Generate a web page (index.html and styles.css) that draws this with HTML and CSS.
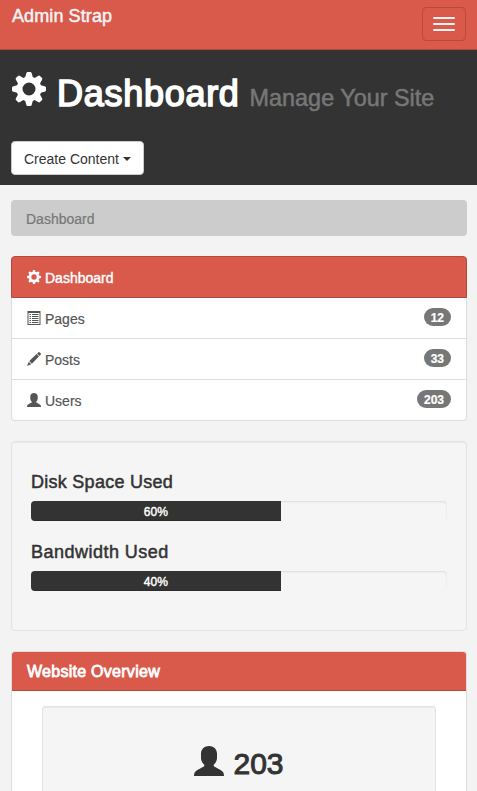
FILE: index.html
```html
<!DOCTYPE html>
<html lang="en">
<head>
<meta charset="utf-8">
<title>Admin Strap</title>
<link rel="stylesheet" href="styles.css">
</head>
<body>
<svg class="defs" width="0" height="0">
  <symbol id="gear" viewBox="-17 -17 34 34">
    <path id="tooth" d="M-4.300-10-2.800-15.500Q-2.500-17-1.500-17H1.500Q2.500-17 2.800-15.500L4.300-10Z"/>
    <use href="#tooth" transform="rotate(45)"/><use href="#tooth" transform="rotate(90)"/>
    <use href="#tooth" transform="rotate(135)"/><use href="#tooth" transform="rotate(180)"/>
    <use href="#tooth" transform="rotate(225)"/><use href="#tooth" transform="rotate(270)"/>
    <use href="#tooth" transform="rotate(315)"/>
    <circle r="9.500" fill="none" stroke="currentColor" stroke-width="6"/>
  </symbol>
  <symbol id="user" viewBox="0 0 30 30">
    <path d="M15 0C19.500 0 23 3 23 7.500V12C23 14 22 17 19.700 18.700V20C20 21 28 24 29.300 26.500Q30 27.500 30 30H0Q0 27.500.7 26.500C2 24 10 21 10.300 20V18.700C8 17 7 14 7 12V7.500C7 3 10.500 0 15 0Z"/>
  </symbol>
</svg>

<nav class="navbar">
  <a class="brand">Admin Strap</a>
  <button class="toggle" aria-label="Menu"><i></i><i></i><i></i></button>
</nav>

<header class="header">
  <h1 class="title">
    <svg class="title-icon"><use href="#gear"/></svg>
    <span class="title-text">Dashboard</span>
    <small class="subtitle">Manage Your Site</small>
  </h1>
  <button class="create"><span>Create Content</span><i class="caret"></i></button>
</header>

<main class="main">
  <div class="breadcrumb">Dashboard</div>

  <div class="list">
    <a class="item active"><svg class="icon"><use href="#gear"/></svg><span class="label">Dashboard</span></a>
    <a class="item">
      <svg class="icon" viewBox="0 0 14 14"><path fill-rule="evenodd" d="M.5 0H13.500V14H.5ZM1.500 2V13H12.500V2Z"/><path d="M2.500 3H4V4H2.500ZM5 3H11.500V4H5ZM2.500 5H4V6H2.500ZM5 5H11.500V6H5ZM2.500 7H4V8H2.500ZM5 7H11.500V8H5ZM2.500 9H4V10H2.500ZM5 9H11.500V10H5ZM2.500 11H4V12H2.500ZM5 11H11.500V12H5Z"/></svg>
      <span class="label">Pages</span><span class="badge">12</span>
    </a>
    <a class="item">
      <svg class="icon" viewBox="0 0 14 14"><path d="M10 1.700 11.200.5Q12-.3 12.800.5L13.600 1.300Q14.300 2 13.600 2.800L12.400 4ZM9.500 2.100 11.900 4.500 4.900 11.700 2.300 9.100ZM1.800 9.700 4.300 12.200 0 14Z"/></svg>
      <span class="label">Posts</span><span class="badge">33</span>
    </a>
    <a class="item"><svg class="icon"><use href="#user"/></svg><span class="label">Users</span><span class="badge">203</span></a>
  </div>

  <section class="well usage">
    <h4 class="usage-title disk">Disk Space Used</h4>
    <div class="progress"><div class="bar">60%</div></div>
    <h4 class="usage-title bandwidth">Bandwidth Used</h4>
    <div class="progress"><div class="bar">40%</div></div>
  </section>

  <section class="panel">
    <h3 class="panel-heading"><span>Website Overview</span></h3>
    <div class="panel-body">
      <div class="well stat">
        <h2 class="stat-value"><svg class="stat-icon"><use href="#user"/></svg><span>203</span></h2>
      </div>
    </div>
  </section>
</main>
</body>
</html>
```

FILE: styles.css
```css
* { box-sizing: border-box; }
body {
  margin: 0;
  background: #f3f3f3;
  color: #333;
  font: 14px/20px "Liberation Sans", sans-serif;
}
svg { display: block; fill: currentColor; flex: none; }
.defs { display: none; }
h1, h2, h3, h4 { margin: 0; }
button { font: inherit; }

.navbar {
  display: flex;
  justify-content: space-between;
  height: 50px;
  padding: 6px 11px 0 12px;
  background: #d9594b;
  border-bottom: 1px solid #b6483d;
}
.brand { color: #f3f3f3; font-size: 18px; line-height: 20px; letter-spacing: .1px; -webkit-text-stroke: .5px; }
.toggle {
  display: flex;
  flex-direction: column;
  gap: 4px;
  width: 44px;
  height: 34px;
  margin-top: 1px;
  padding: 9px 10px;
  background: none;
  border: 1px solid #b6483d;
  border-radius: 4px;
}
.toggle i { height: 2px; background: #f3f3f3; border-radius: 1px; }

.header { height: 135px; padding: 22px 11px 0; background: #333; color: #fff; }
.title { display: flex; height: 40px; font-size: 36px; line-height: 40px; font-weight: 400; }
.title-icon { width: 34px; height: 34px; margin-left: 1px; }
.title-text { margin: 2px 0 0 11px; letter-spacing: .72px; -webkit-text-stroke: 1.6px; }
.subtitle { margin: 6px 0 0 10px; font-size: 23.4px; color: #777; -webkit-text-stroke: .5px; }
.create {
  display: flex;
  align-items: center;
  width: 133px;
  height: 34px;
  margin-top: 29px;
  padding: 2px 12px 0;
  background: #fff;
  border: 1px solid #ccc;
  border-radius: 4px;
  color: #333;
}
.caret { margin-left: 4px; border: 4px solid transparent; border-top-color: #333; border-bottom: 0; }

.main { padding: 15px 10px 0 11px; }
.breadcrumb {
  height: 36px;
  margin-bottom: 20px;
  padding: 9px 15px;
  background: #ccc;
  border-radius: 4px;
  color: #777;
  -webkit-text-stroke: .2px;
}

.list { background: #fff; border: 1px solid #ddd; border-top: 0; border-radius: 4px; margin-bottom: 20px; }
.item {
  display: flex;
  height: 41px;
  padding: 10px 15px 0;
  border-bottom: 1px solid #ddd;
  color: #555;
  -webkit-text-stroke: .2px;
}
.item:last-child { height: 40px; border-bottom: 0; }
.active {
  height: 42px;
  margin: 0 -1px;
  background: #d9594b;
  border: 1px solid #b6483d;
  border-radius: 4px 4px 0 0;
  color: #fff;
  -webkit-text-stroke: .4px;
}
.icon { width: 14px; height: 14px; margin-top: 3px; }
.label { margin: 1px 0 0 4px; }
.badge {
  height: 18px;
  margin-left: auto;
  padding: 1px 7px 0;
  border-radius: 9px;
  background: #777;
  color: #fff;
  font-size: 12px;
  line-height: 18px;
  font-weight: 700;
}

.well {
  background: #f5f5f5;
  border: 1px solid #e3e3e3;
  border-radius: 4px;
  box-shadow: inset 0 1px 1px rgba(0, 0, 0, .05);
}
.usage { height: 190px; padding: 30px 19px 0; margin-bottom: 20px; }
.usage-title { margin-bottom: 9px; font-size: 18px; line-height: 20px; font-weight: 400; -webkit-text-stroke: .5px; }
.disk { letter-spacing: .27px; }
.bandwidth { letter-spacing: .48px; }
.progress {
  height: 20px;
  margin-bottom: 21px;
  overflow: hidden;
  background: #f5f5f5;
  border-radius: 4px;
  box-shadow: inset 0 1px 2px rgba(0, 0, 0, .1);
}
.bar {
  width: 60%;
  height: 20px;
  background: #333;
  box-shadow: inset 0 -1px 0 rgba(0, 0, 0, .15);
  color: #fff;
  font-size: 12px;
  line-height: 22px;
  text-align: center;
  -webkit-text-stroke: .4px;
}

.panel {
  height: 140px;
  overflow: hidden;
  background: #fff;
  border: 1px solid #ddd;
  border-bottom: 0;
  border-radius: 4px 4px 0 0;
}
.panel-heading {
  height: 39px;
  padding: 10px 15px 0;
  background: #d9594b;
  border-bottom: 1px solid #b6483d;
  color: #fff;
  font-size: 16px;
  line-height: 20px;
  font-weight: 400;
  letter-spacing: .27px;
  -webkit-text-stroke: .8px;
}
.panel-body { padding: 15px 30px 0; }
.stat { height: 85px; padding-top: 39px; border-bottom: 0; border-radius: 4px 4px 0 0; }
.stat-value { display: flex; justify-content: center; font-size: 30px; line-height: 36px; font-weight: 400; -webkit-text-stroke: 1px; }
.stat-icon { width: 30px; height: 30px; }
.stat-value span { margin-left: 9px; }
```
